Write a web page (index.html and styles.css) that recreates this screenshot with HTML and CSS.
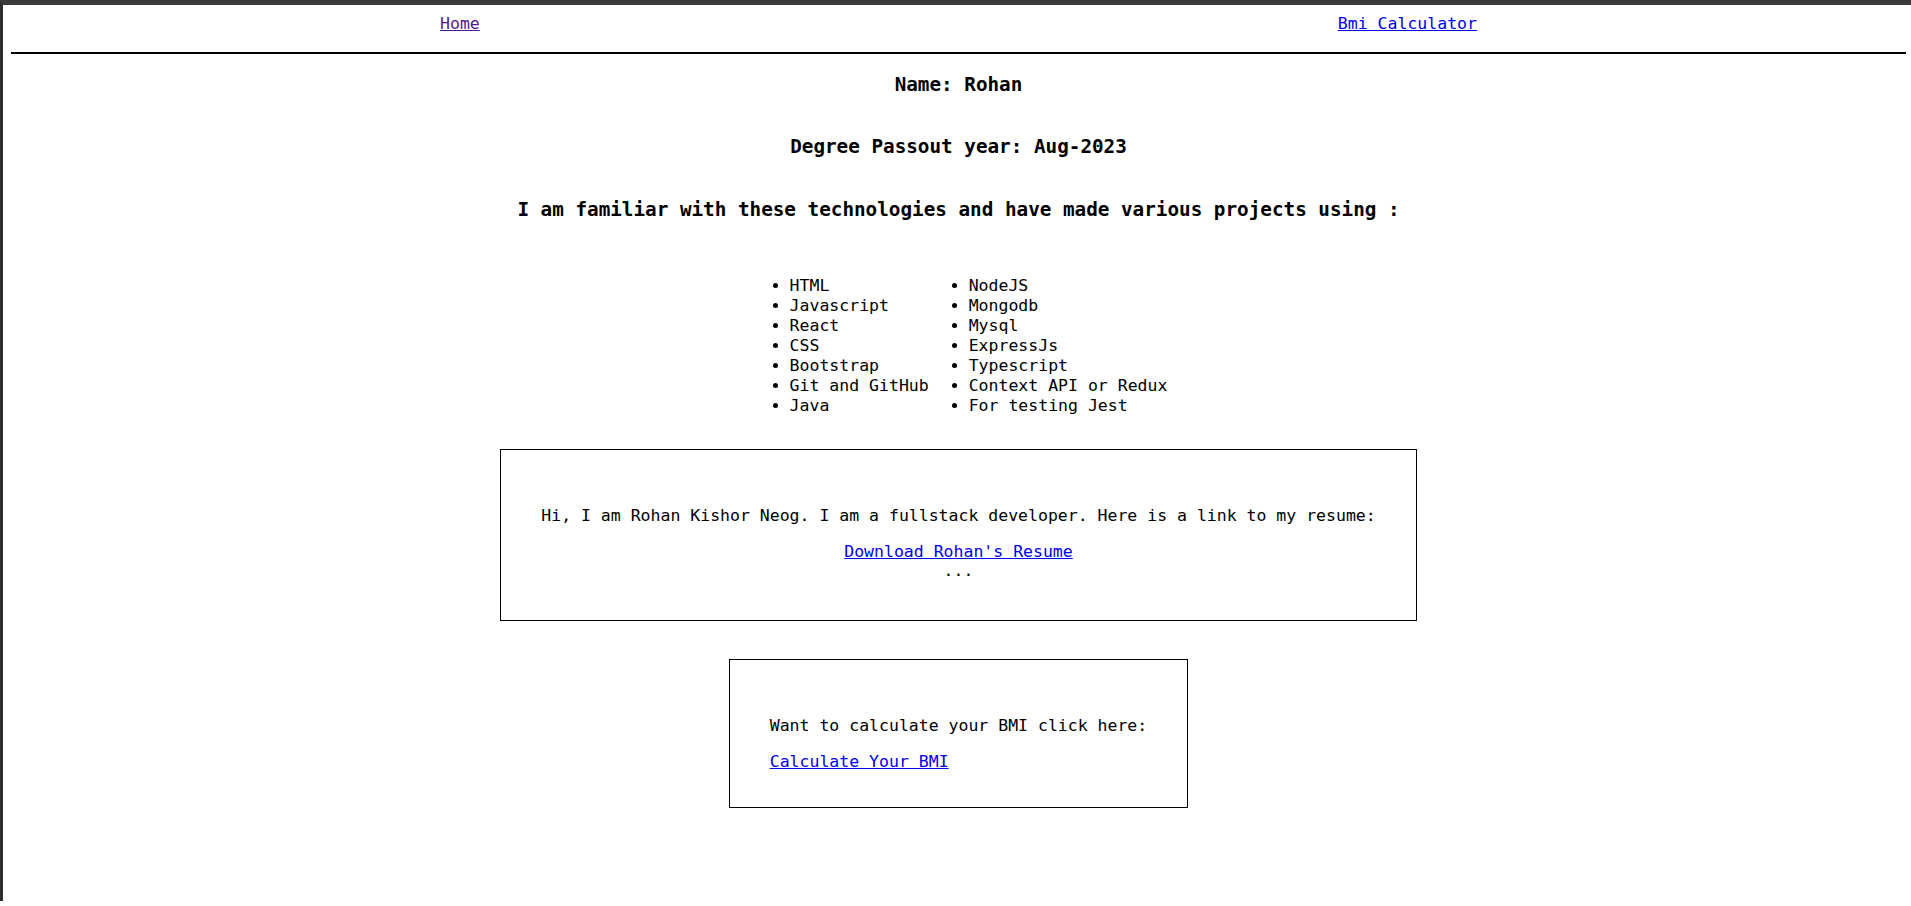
FILE: index.html
```html
<!DOCTYPE html>
<html lang="en">
<head>
<meta charset="utf-8">
<title>Rohan</title>
<link rel="stylesheet" href="styles.css">
</head>
<body>
<div class="frame">
  <div class="page">
    <nav class="nav">
      <a class="nav-link visited" href="#">Home</a>
      <a class="nav-link" href="#">Bmi Calculator</a>
    </nav>
    <hr class="rule">
    <h3 class="heading first">Name: Rohan</h3>
    <h3 class="heading">Degree Passout year: Aug-2023</h3>
    <h3 class="heading last">I am familiar with these technologies and have made various projects using :</h3>
    <div class="skills">
      <ul class="skill-list">
        <li>HTML</li>
        <li>Javascript</li>
        <li>React</li>
        <li>CSS</li>
        <li>Bootstrap</li>
        <li>Git and GitHub</li>
        <li>Java</li>
      </ul>
      <ul class="skill-list">
        <li>NodeJS</li>
        <li>Mongodb</li>
        <li>Mysql</li>
        <li>ExpressJs</li>
        <li>Typescript</li>
        <li>Context API or Redux</li>
        <li>For testing Jest</li>
      </ul>
    </div>
    <div class="box-row">
      <div class="box box-center">
        <p class="box-text">Hi, I am Rohan Kishor Neog. I am a fullstack developer. Here is a link to my resume:</p>
        <div><a href="#">Download Rohan's Resume</a></div>
        <div>...</div>
      </div>
    </div>
    <div class="box-row second">
      <div class="box box-left">
        <p class="box-text">Want to calculate your BMI click here:</p>
        <div><a href="#">Calculate Your BMI</a></div>
      </div>
    </div>
  </div>
</div>
</body>
</html>
```
FILE: styles.css
```css
html, body {
  margin: 0;
  padding: 0;
  background: #ffffff;
}

body {
  font-family: "DejaVu Sans Mono", "Liberation Mono", monospace;
  font-size: 16.5px;
  color: #000;
}

.frame {
  border-top: 5px solid #3a3a3a;
  border-left: 3px solid #2e2e2e;
  min-height: 901px;
  box-sizing: border-box;
}

.page {
  padding: 0 5px 0 8px;
}

.nav {
  display: flex;
  justify-content: space-around;
  padding-top: 9px;
  padding-bottom: 19px;
}

a {
  color: #0000ee;
  text-decoration: underline;
}

.nav-link.visited {
  color: #551a8b;
}

.rule {
  margin: 0;
  border: 0;
  border-top: 2px solid #000;
  height: 0;
}

.heading {
  font-size: 19.3px;
  font-weight: bold;
  line-height: 23px;
  text-align: center;
  margin: 0 0 39.7px;
}

.heading.first {
  margin-top: 18.5px;
}

.heading.last {
  margin-bottom: 55px;
}

.skills {
  display: flex;
  justify-content: center;
}

.skill-list {
  margin: 0;
  padding-left: 40px;
  line-height: 20.1px;
}

.box-row {
  display: flex;
  justify-content: center;
  margin-top: 32.3px;
}

.box-row.second {
  margin-top: 38px;
}

.box {
  border: 1px solid #000;
  padding: 40px;
}

.box-center {
  text-align: center;
}

.box-left {
  text-align: left;
  padding-bottom: 36.6px;
}

.box-text {
  margin: 16.5px 0;
}
```
